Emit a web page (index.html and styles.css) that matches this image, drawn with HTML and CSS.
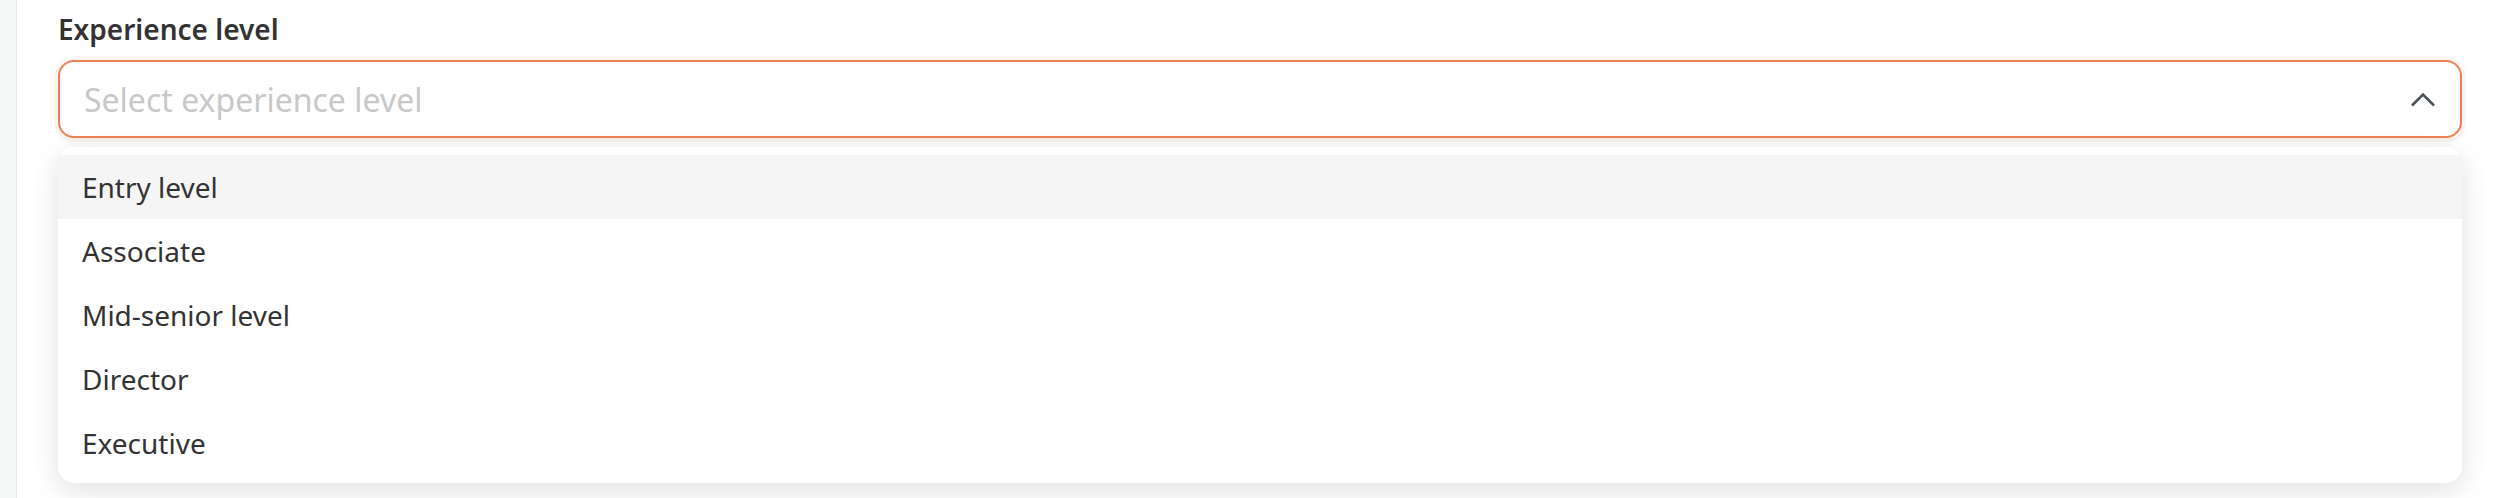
FILE: index.html
```html
<!DOCTYPE html>
<html lang="en">
<head>
    <meta charset="UTF-8">
    <meta name="viewport" content="width=device-width, initial-scale=1.0">
    <title>Experience level</title>
    <link rel="stylesheet" href="styles.css">
</head>
<body>
    <div class="rail"></div>
    <main class="form-area">
        <!-- Experience level select, open -->
        <div class="field">
            <label class="field-label" for="experienceLevel">Experience level</label>
            <div class="select-box" id="experienceLevel">
                <span class="select-placeholder">Select experience level</span>
                <svg class="select-chevron" width="26" height="15" viewBox="0 0 26 15">
                    <path d="M2 13.5 L13 2.5 L24 13.5" fill="none" stroke="#4b5257" stroke-width="2.6"/>
                </svg>
            </div>
            <ul class="select-menu">
                <li class="select-option active">Entry level</li>
                <li class="select-option">Associate</li>
                <li class="select-option">Mid-senior level</li>
                <li class="select-option">Director</li>
                <li class="select-option">Executive</li>
            </ul>
        </div>
    </main>
</body>
</html>
```

FILE: styles.css
```css
body {
    font-family: "Noto Sans", "Open Sans", sans-serif;
    margin: 0;
    padding: 0;
    background-color: #ffffff;
    display: flex;
    height: 498px;
    overflow: hidden;
}
.rail {
    width: 16px;
    flex-shrink: 0;
    background-color: #f6f8f8;
    border-right: 1px solid #e6eaea;
}
.form-area {
    flex: 1;
    padding: 0 34px 0 41px;
}
.field-label {
    display: block;
    font-size: 28px;
    font-weight: 600;
    color: #333333;
    line-height: 38px;
    margin-top: 10px;
    margin-bottom: 12px;
}
.select-box {
    height: 74px;
    border: 2px solid #ee8154;
    border-radius: 16px;
    box-shadow: 0 0 0 4px rgba(238, 129, 84, 0.07), 0 6px 10px rgba(0, 0, 0, 0.03);
    display: flex;
    align-items: center;
    justify-content: space-between;
    padding: 0 24px;
    background-color: white;
}
.select-placeholder {
    font-size: 32px;
    color: #c8c8c8;
}
.select-chevron {
    display: block;
}
.select-menu {
    list-style-type: none;
    margin: 9px 0 0 0;
    padding: 8px 0;
    background-color: white;
    border-radius: 16px;
    box-shadow: 0 8px 28px rgba(0, 0, 0, 0.12);
}
.select-option {
    height: 64px;
    line-height: 64px;
    padding: 0 24px;
    font-size: 28px;
    color: #333333;
}
.select-option.active {
    background-color: #f5f5f5;
}
```
